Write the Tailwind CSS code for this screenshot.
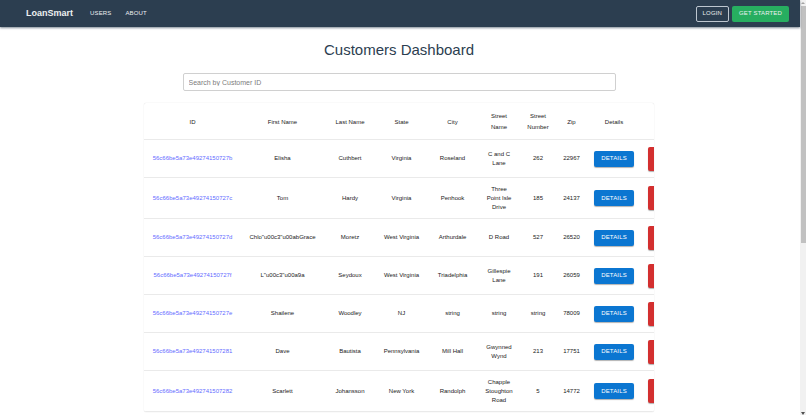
<!DOCTYPE html>
<html lang="en">
<head>
    <meta charset="UTF-8">
    <meta name="viewport" content="width=device-width, initial-scale=1.0">
    <title>Customers Dashboard</title>
    <script src="https://cdn.jsdelivr.net/npm/@tailwindcss/browser@4"></script>
</head>
<body class="flex h-screen overflow-hidden bg-white font-['Liberation_Sans',Arial,sans-serif] text-[6px] text-[#222222]">
    <div class="flex min-w-0 flex-1 flex-col">
        <header class="z-10 flex h-[27px] shrink-0 items-center bg-[#2c3e50] pr-[11px] pl-[26px] text-[#ecf0f1] shadow-[0_1px_2px_rgba(44,62,80,0.6)]">
            <a href="#" class="text-[9px] font-bold">LoanSmart</a>
            <nav class="ml-[17px] flex flex-1 gap-[14px] tracking-wide">
                <a href="#users">USERS</a>
                <a href="#about">ABOUT</a>
            </nav>
            <div class="flex gap-[3px]">
                <button type="button" class="h-4 rounded-[2px] border border-[#bdc6cf] px-[6px] tracking-wide">LOGIN</button>
                <button type="button" class="h-4 rounded-[2px] bg-[#27ae60] px-[7px] tracking-wide">GET STARTED</button>
            </div>
        </header>

        <main class="flex flex-1 flex-col items-center overflow-hidden pt-[14px] pr-[2px]">
            <h1 class="text-[15px] leading-[18px] text-[#2c3e50]">Customers Dashboard</h1>

            <input type="search" id="search" aria-label="Search by Customer ID" placeholder="Search by Customer ID"
                   class="mt-[14px] h-[18px] w-full max-w-[433px] shrink-0 rounded-[2px] border border-[#d0d0d0] px-[5px] text-[7px] placeholder:text-[#7c7c7c]">

            <div class="mt-3 w-full max-w-[510px] shrink-0 overflow-hidden rounded-[2px] shadow-[0_0_1px_rgba(0,0,0,0.2)]">
                <table class="w-[560px] table-fixed text-center leading-[9px]">
                    <colgroup>
                        <col class="w-[97px]">
                        <col class="w-[83px]">
                        <col class="w-[52px]">
                        <col class="w-[51px]">
                        <col class="w-[51px]">
                        <col class="w-[42px]">
                        <col class="w-[36px]">
                        <col class="w-[31px]">
                        <col class="w-[54px]">
                        <col>
                    </colgroup>
                    <thead>
                        <tr class="h-9 border-b border-[#eaeaea] leading-[11px] *:p-0 *:pt-[3px] *:font-normal">
                            <th>ID</th>
                            <th>First Name</th>
                            <th>Last Name</th>
                            <th>State</th>
                            <th>City</th>
                            <th>Street<br>Name</th>
                            <th>Street<br>Number</th>
                            <th>Zip</th>
                            <th>Details</th>
                            <th aria-label="Delete"></th>
                        </tr>
                    </thead>
                    <tbody id="customers"></tbody>
                </table>
            </div>
        </main>
    </div>

    <!-- Page scrollbar -->
    <div class="flex w-[6px] shrink-0 flex-col items-center bg-[#f1f1f1]" aria-hidden="true">
        <svg class="h-[6px] w-[6px] shrink-0" viewBox="0 0 6 6"><path d="M1 4L3 2L5 4Z" fill="#a3a3a3"/></svg>
        <div class="h-[57%] w-[5px] bg-[#c1c1c1]"></div>
        <svg class="mt-auto h-[4px] w-[6px] shrink-0" viewBox="0 0 6 4"><path d="M1 1H5L3 4Z" fill="#505050"/></svg>
    </div>

    <script>
        const customers = [
            ['56c66be5a73e49274150727b', 'Elisha', 'Cuthbert', 'Virginia', 'Roseland', 'C and C Lane', '262', '22967'],
            ['56c66be5a73e49274150727c', 'Tom', 'Hardy', 'Virginia', 'Penhook', 'Three Point Isle Drive', '185', '24137'],
            ['56c66be5a73e49274150727d', 'Chlo"u00c3"u00abGrace', 'Moretz', 'West Virginia', 'Arthurdale', 'D Road', '527', '26520'],
            ['56c66be5a73e49274150727f', 'L"u00c3"u00a9a', 'Seydoux', 'West Virginia', 'Triadelphia', 'Gillespie Lane', '191', '26059'],
            ['56c66be5a73e49274150727e', 'Shailene', 'Woodley', 'NJ', 'string', 'string', 'string', '78009'],
            ['56c66be5a73e492741507281', 'Dave', 'Bautista', 'Pennsylvania', 'Mill Hall', 'Gwynned Wynd', '213', '17751'],
            ['56c66be5a73e492741507282', 'Scarlett', 'Johansson', 'New York', 'Randolph', 'Chapple Stoughton Road', '5', '14772'],
        ];

        document.getElementById('customers').innerHTML = customers.map(([id, ...fields]) => `
            <tr class="border-b border-[#eaeaea] *:px-[7px] *:pt-[7px] *:pb-[6px]">
                <td><a href="#${id}" class="text-[#646cff]">${id}</a></td>
                ${fields.map((field) => `<td>${field}</td>`).join('')}
                <td>
                    <button type="button" class="block h-4 w-full rounded-[2px] bg-[#0b76d1] tracking-wide text-white shadow-[0_1px_1px_rgba(0,0,0,0.3)]">DETAILS</button>
                </td>
                <td>
                    <button type="button" aria-label="Delete" class="block h-6 w-full rounded-[2px] bg-[#d32f2f] shadow-[0_1px_1px_rgba(0,0,0,0.3)]"></button>
                </td>
            </tr>`).join('');
    </script>
</body>
</html>
